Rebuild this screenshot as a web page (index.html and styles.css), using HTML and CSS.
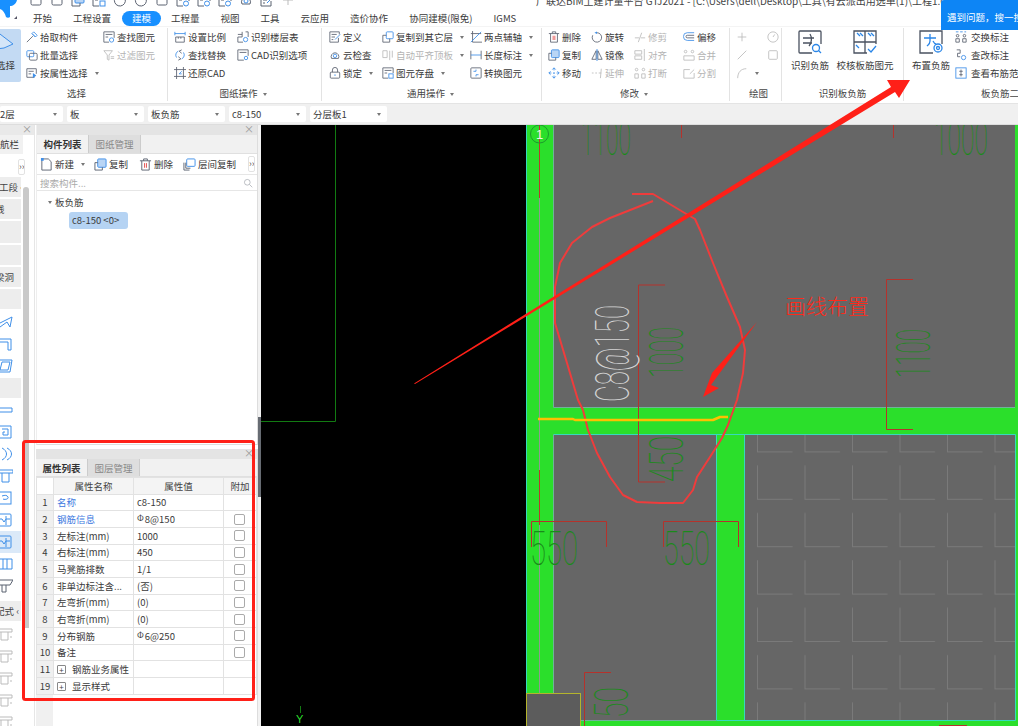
FILE: index.html
```html
<!DOCTYPE html>
<html lang="zh">
<head>
<meta charset="utf-8">
<title>广联达BIM土建计量平台 GTJ2021</title>
<link rel="stylesheet" href="styles.css">
</head>
<body>
<svg class="defs" width="0" height="0">
<symbol id="box" viewBox="0 0 14 14"><rect x="2" y="2" width="10" height="10" rx="1.5" class="g"/></symbol>
<symbol id="pick" viewBox="0 0 14 14"><path d="M1 13 8 6" class="g"/><path d="M7 3 11 7M9 1l4 4-2 2-4-4z" class="b"/></symbol>
<symbol id="batch" viewBox="0 0 14 14"><rect x="1" y="2" width="8" height="7" rx="1" class="b"/><rect x="4" y="5" width="9" height="8" rx="1.5" class="g"/></symbol>
<symbol id="prop" viewBox="0 0 14 14"><path d="M10 12H1V2h11v6M3 5h6M3 8h3" class="g"/><path d="M8 7v6l4-3z" class="fb"/></symbol>
<symbol id="find" viewBox="0 0 14 14"><path d="M7 13H1V1h12v7M3 4h8M3 7h3" class="g"/><circle cx="10" cy="10.500" r="2.500" class="b"/></symbol>
<symbol id="filter" viewBox="0 0 14 14"><path d="M1 2h10L7 7v6L5 12V7z" class="l"/><path d="M9 9h4M9 11h4" class="l"/></symbol>
<symbol id="scale" viewBox="0 0 14 14"><path d="M1 3h12M1 1v4M13 1v4" class="b"/><path d="M2 7h10v6H2zM5 7v2M8 7v2" class="g"/></symbol>
<symbol id="swap" viewBox="0 0 14 14"><path d="M3 10A5 5 0 0 1 5 2.500M11 4a5 5 0 0 1-2 7.500" class="b"/><path d="M9 1l-3 1.500L9 5M5 9l3 2.500L5 13" class="g"/></symbol>
<symbol id="restore" viewBox="0 0 14 14"><path d="M3 0v14M11 0v14M0 3h14M0 11h14" class="g"/><path d="M9 5 6 8h3" class="b"/></symbol>
<symbol id="floor" viewBox="0 0 14 14"><path d="M6 1v6H1v6h6M10 1h3v6M6 4H1" class="g"/><circle cx="10" cy="10" r="2.500" class="b"/></symbol>
<symbol id="cad" viewBox="0 0 14 14"><path d="M8 13H1V1h12v7M3 4h8" class="g"/><circle cx="10.500" cy="10.500" r="2" class="b"/></symbol>
<symbol id="def" viewBox="0 0 14 14"><path d="M11 8v5H1V1h11v3M3 4h6M3 7h4M3 10h2" class="g"/><path d="M7 10l6-6" class="b"/></symbol>
<symbol id="cloud" viewBox="0 0 14 14"><path d="M3 11A4.500 4.500 0 1 1 11 11z" class="g"/><circle cx="7" cy="8" r="2" class="b"/></symbol>
<symbol id="lock" viewBox="0 0 14 14"><rect x="1.500" y="6" width="11" height="7" rx="1" class="g"/><path d="M4 6V3.500a3 3 0 0 1 6 0V6" class="g"/><path d="M7 8.500v2" class="b"/></symbol>
<symbol id="copylayer" viewBox="0 0 14 14"><rect x="5" y="1" width="8" height="8" rx="1" class="b"/><path d="M5 5H1v8h8V9" class="g"/></symbol>
<symbol id="align" viewBox="0 0 14 14"><path d="M1 2h5v8H1zM9 2v11M12 2v8" class="l"/></symbol>
<symbol id="save" viewBox="0 0 14 14"><path d="M7 13H1V1h12v6M3 4h8M3 7h3" class="g"/><rect x="8" y="8" width="5" height="5" class="b"/></symbol>
<symbol id="axis" viewBox="0 0 14 14"><path d="M3 0v13h11M1 3h12" class="g"/><path d="M1 13 13 1" class="b"/></symbol>
<symbol id="len" viewBox="0 0 14 14"><path d="M1 2v10M13 2v10" class="g"/><path d="M1 7h12" class="b"/></symbol>
<symbol id="conv" viewBox="0 0 14 14"><rect x="1" y="1" width="12" height="12" rx="1" class="g"/><path d="M4 5h3V3M10 9H7v2" class="b"/></symbol>
<symbol id="del" viewBox="0 0 14 14"><path d="M1 3h12M5 3V1h4v2M3 3v10h8V3" class="g"/><path d="M6 5.500v5M8 5.500v5" class="r"/></symbol>
<symbol id="rot" viewBox="0 0 14 14"><path d="M7 2a5.500 5.500 0 1 1-5 3" class="g"/><path d="M7 .5v3L4 2z" class="fb"/></symbol>
<symbol id="trim" viewBox="0 0 14 14"><path d="M1 8h5M8 8h5M9 2 5 13" class="l"/></symbol>
<symbol id="copy" viewBox="0 0 14 14"><rect x="4" y="1" width="9" height="9" rx="1" class="fl"/><path d="M4 5H1v8h8v-3" class="g"/></symbol>
<symbol id="mirror" viewBox="0 0 14 14"><path d="M6 2v10H1zM8 2v10h5z" class="g"/><path d="M7 0v14" class="b"/></symbol>
<symbol id="alignv" viewBox="0 0 14 14"><path d="M1 2h8v4H1zM1 8h8v4H1zM12 0v14" class="l"/></symbol>
<symbol id="move" viewBox="0 0 14 14"><path d="M7 1v3M7 10v3M1 7h3M10 7h3" class="b"/><circle cx="7" cy="7" r="1" class="fb"/><path d="M5 3l2-2 2 2M5 11l2 2 2-2M3 5 1 7l2 2M11 5l2 2-2 2" class="b"/></symbol>
<symbol id="ext" viewBox="0 0 14 14"><path d="M1 7h2M5 7h2M9 7h3M12 2l-1 11" class="l"/></symbol>
<symbol id="brk" viewBox="0 0 14 14"><circle cx="3" cy="3" r="1.500" class="l"/><circle cx="11" cy="3" r="1.500" class="l"/><path d="M1 8h4v5H1zM9 8h4v5H9z" class="l"/></symbol>
<symbol id="off" viewBox="0 0 14 14"><path d="M13 2H5a4.500 4.500 0 0 0 0 9h8" class="b"/><path d="M13 5H5a1.500 1.500 0 0 0 0 3h8" class="g"/></symbol>
<symbol id="merge" viewBox="0 0 14 14"><circle cx="3" cy="3" r="1.500" class="l"/><circle cx="11" cy="3" r="1.500" class="l"/><path d="M1 8h12v5H1z" class="l"/></symbol>
<symbol id="split" viewBox="0 0 14 14"><path d="M13 7v6H1V3h7M8 8l5-5" class="l"/></symbol>
<symbol id="xchg" viewBox="0 0 14 14"><path d="M1 1h3M6 1h3M11 1h2" class="b"/><circle cx="3" cy="5.500" r="1.500" class="g"/><circle cx="11" cy="5.500" r="1.500" class="g"/><path d="M1 9h4v4H1zM9 9h4v4H9z" class="g"/></symbol>
<symbol id="chk" viewBox="0 0 14 14"><path d="M2 1h4v4H3v4h3" class="g"/><circle cx="10" cy="10" r="2.500" class="b"/></symbol>
<symbol id="range" viewBox="0 0 14 14"><rect x="1" y="1" width="12" height="12" class="b"/><path d="M7 3v8M5 5h4M5 9h4" class="g"/></symbol>
<symbol id="plus" viewBox="0 0 14 14"><path d="M7 2v10M2 7h10" class="l"/></symbol>
<symbol id="dial" viewBox="0 0 14 14"><circle cx="7" cy="7" r="6" class="l"/><path d="M7 7l2-3" class="l"/></symbol>
<symbol id="line" viewBox="0 0 14 14"><path d="M2 12 12 2" class="l"/></symbol>
<symbol id="sq" viewBox="0 0 14 14"><rect x="2" y="2" width="10" height="10" rx="1" class="l"/></symbol>
<symbol id="arc" viewBox="0 0 14 14"><path d="M2 13C2 6 6 2 12 2" class="l"/></symbol>
<symbol id="new" viewBox="0 0 14 14"><path d="M3 1h6l3 3v9H2V2" class="g"/><rect x="1" y="0" width="3" height="3" class="fb"/></symbol>
<symbol id="lcopy" viewBox="0 0 14 14"><rect x="4" y="1" width="9" height="8" rx="1" class="b"/><path d="M1 5v8h6M3 5v6h5" class="g"/></symbol>
<symbol id="mag" viewBox="0 0 14 14"><circle cx="6" cy="6" r="4" class="g"/><path d="M9 9l4 4" class="g"/></symbol>
<symbol id="n1" viewBox="0 0 14 14"><path d="M1 8 13 2 11 12 8 7 1 12" class="b"/></symbol>
<symbol id="n2" viewBox="0 0 14 14"><path d="M0 2h12v11h-3V5H0" class="b"/></symbol>
<symbol id="n3" viewBox="0 0 14 14"><path d="M0 1h13l-2 12H0M3 3l-2 8h8l2-8z" class="b"/></symbol>
<symbol id="n4" viewBox="0 0 14 14"><path d="M0 5h13v4H0" class="b"/></symbol>
<symbol id="n5" viewBox="0 0 14 14"><path d="M0 1h12v12H0M3 4h6v6H4V7h2" class="b"/></symbol>
<symbol id="n6" viewBox="0 0 14 14"><path d="M3 1c6 3 6 9 0 12M8 1c6 3 6 9 0 12" class="b"/></symbol>
<symbol id="n7" viewBox="0 0 14 14"><path d="M0 1h14v3H0M3 4v9h7V4" class="b"/></symbol>
<symbol id="n8" viewBox="0 0 14 14"><rect x="0" y="1" width="12" height="12" class="b"/><path d="M3 5c3-1 5-1 6 1s-3 3-5 2" class="b"/></symbol>
<symbol id="n9" viewBox="0 0 14 14"><path d="M0 6h3l2 3 2-3h4M7 3v9" class="b"/><rect x="0" y="1" width="12" height="12" rx="1" class="b"/></symbol>
<symbol id="n10" viewBox="0 0 14 14"><path d="M0 2h13v10H0M4 2v10M8 2v10" class="b"/></symbol>
<symbol id="n11" viewBox="0 0 14 14"><path d="M0 1h14l-3 5H0M3 6v7h4V6" class="g"/></symbol>
<symbol id="n12" viewBox="0 0 14 14"><path d="M0 2h13v3H0M2 5v8h7V5M11 10h2" class="l"/></symbol>
</svg>

<div class="app">
  <header class="titlebar">
    <div class="qat">
      <svg class="qi"><use href="#box"/></svg><svg class="qi"><use href="#box"/></svg><svg class="qi"><use href="#copy"/></svg><svg class="qi"><use href="#save"/></svg><svg class="qi"><use href="#rot"/></svg><svg class="qi"><use href="#rot"/></svg><svg class="qi"><use href="#box"/></svg><svg class="qi"><use href="#find"/></svg><svg class="qi"><use href="#find"/></svg><svg class="qi"><use href="#find"/></svg><svg class="qi"><use href="#cloud"/></svg><svg class="qi"><use href="#def"/></svg><svg class="qi"><use href="#plus"/></svg>
    </div>
    <div class="apptitle">广联达BIM土建计量平台 GTJ2021 - [C:\Users\dell\Desktop\工具\有云派出用选单(1)\工程1.GTJ]</div>
  </header>
  <svg class="logo" viewBox="0 0 18 19"><path d="M0 0h17c-1 4-4 6-7 6v11c-1 1-3 1-4 0-1-4-3-7-6-8z"/><path class="logo-mark" d="M14 19l3-3v3z"/></svg>
  <div class="help">遇到问题，搜一搜</div>

  <nav class="tabs">
    <span class="tab">开始</span><span class="tab">工程设置</span><span class="tab active">建模</span><span class="tab">工程量</span><span class="tab">视图</span><span class="tab">工具</span><span class="tab">云应用</span><span class="tab">造价协作</span><span class="tab">协同建模(限免)</span><span class="tab">IGMS</span>
  </nav>

  <section class="ribbon">
    <div class="grp g1">
      <div class="body">
        <div class="bigsel"><svg viewBox="0 0 21 30"><path d="M-4 2 13 15 4 19-4 20" class="bigarrow"/></svg><span>选择</span></div>
        <div class="col w77">
          <div class="it"><svg><use href="#pick"/></svg>拾取构件</div>
          <div class="it"><svg><use href="#batch"/></svg>批量选择</div>
          <div class="it"><svg><use href="#prop"/></svg>按属性选择<i class="car"></i></div>
        </div>
        <div class="col">
          <div class="it"><svg><use href="#find"/></svg>查找图元</div>
          <div class="it off"><svg><use href="#filter"/></svg>过滤图元</div>
        </div>
      </div>
      <div class="lbl">选择</div>
    </div>
    <div class="grp g2">
      <div class="body">
        <div class="col w63">
          <div class="it"><svg><use href="#scale"/></svg>设置比例</div>
          <div class="it"><svg><use href="#swap"/></svg>查找替换</div>
          <div class="it"><svg><use href="#restore"/></svg>还原CAD</div>
        </div>
        <div class="col">
          <div class="it"><svg><use href="#floor"/></svg>识别楼层表</div>
          <div class="it"><svg><use href="#cad"/></svg>CAD识别选项</div>
        </div>
      </div>
      <div class="lbl">图纸操作<i class="car"></i></div>
    </div>
    <div class="grp g3">
      <div class="body">
        <div class="col w53">
          <div class="it"><svg><use href="#def"/></svg>定义</div>
          <div class="it"><svg><use href="#cloud"/></svg>云检查</div>
          <div class="it"><svg><use href="#lock"/></svg>锁定<i class="car"></i></div>
        </div>
        <div class="col w88">
          <div class="it"><svg><use href="#copylayer"/></svg>复制到其它层<i class="car"></i></div>
          <div class="it off"><svg><use href="#align"/></svg>自动平齐顶板<i class="car"></i></div>
          <div class="it"><svg><use href="#save"/></svg>图元存盘<i class="car"></i></div>
        </div>
        <div class="col">
          <div class="it"><svg><use href="#axis"/></svg>两点辅轴<i class="car"></i></div>
          <div class="it"><svg><use href="#len"/></svg>长度标注<i class="car"></i></div>
          <div class="it"><svg><use href="#conv"/></svg>转换图元</div>
        </div>
      </div>
      <div class="lbl">通用操作<i class="car"></i></div>
    </div>
    <div class="grp g4">
      <div class="body">
        <div class="col w43">
          <div class="it"><svg><use href="#del"/></svg>删除</div>
          <div class="it"><svg><use href="#copy"/></svg>复制</div>
          <div class="it"><svg><use href="#move"/></svg>移动</div>
        </div>
        <div class="col w43">
          <div class="it"><svg><use href="#rot"/></svg>旋转</div>
          <div class="it"><svg><use href="#mirror"/></svg>镜像</div>
          <div class="it off"><svg><use href="#ext"/></svg>延伸</div>
        </div>
        <div class="col w49">
          <div class="it off"><svg><use href="#trim"/></svg>修剪</div>
          <div class="it off"><svg><use href="#alignv"/></svg>对齐</div>
          <div class="it off"><svg><use href="#brk"/></svg>打断</div>
        </div>
        <div class="col">
          <div class="it"><svg><use href="#off"/></svg>偏移</div>
          <div class="it off"><svg><use href="#merge"/></svg>合并</div>
          <div class="it off"><svg><use href="#split"/></svg>分割</div>
        </div>
      </div>
      <div class="lbl">修改<i class="car"></i></div>
    </div>
    <div class="grp g5">
      <div class="body">
        <div class="col w31">
          <div class="it"><svg><use href="#plus"/></svg></div>
          <div class="it"><svg><use href="#line"/></svg></div>
          <div class="it"><svg><use href="#arc"/></svg><i class="car"></i></div>
        </div>
        <div class="col">
          <div class="it"><svg><use href="#dial"/></svg></div>
          <div class="it"><svg><use href="#sq"/></svg></div>
        </div>
      </div>
      <div class="lbl">绘图</div>
    </div>
    <div class="grp g6">
      <div class="body">
        <div class="big b1">
          <svg viewBox="0 0 24 24"><path d="M14 23H2a1 1 0 0 1-1-1V2a1 1 0 0 1 1-1h20a1 1 0 0 1 1 1v12" class="bg"/><path d="M5 8h11M5 13h9M12 4c2 3 2 9-1 12" class="bg"/><circle cx="18" cy="18" r="3.500" class="bb"/><path d="M20.500 20.500 23 23" class="bb"/></svg>
          <span>识别负筋</span>
        </div>
        <div class="big b2">
          <svg viewBox="0 0 24 24"><path d="M14 23H1V1h22v13M12 1v22M1 12h22" class="bg"/><path d="M4 3l3 3M7 3l3 3M15 3l3 3M18 3l3 3M3 15l3 3" class="bb"/><path d="M15 19l3 3 5-6" class="bb"/></svg>
          <span>校核板筋图元</span>
        </div>
      </div>
      <div class="lbl">识别板负筋</div>
    </div>
    <div class="grp g7">
      <div class="body">
        <div class="big b3">
          <svg viewBox="0 0 24 24"><path d="M14 23H1V1h22v13" class="bg"/><path d="M5 8h12M11 4v7c0 3-2 4-3 5M14 11c1 2 2 3 3 3" class="bb"/><circle cx="19" cy="18" r="1.500" class="bb"/><circle cx="19" cy="18" r="4" class="bb"/></svg>
          <span>布置负筋</span>
        </div>
        <div class="col wide">
          <div class="it"><svg><use href="#xchg"/></svg>交换标注</div>
          <div class="it"><svg><use href="#chk"/></svg>查改标注</div>
          <div class="it"><svg><use href="#range"/></svg>查看布筋范围</div>
        </div>
      </div>
      <div class="lbl lbl7">板负筋二次编辑</div>
    </div>
  </section>

  <section class="selbar">
    <div class="dd first"><span>2层</span><i class="car"></i></div>
    <div class="dd"><span>板</span><i class="car"></i></div>
    <div class="dd"><span>板负筋</span><i class="car"></i></div>
    <div class="dd"><span>c8-150</span><i class="car"></i></div>
    <div class="dd"><span>分层板1</span><i class="car"></i></div>
  </section>

  <main class="main">
    <aside class="nav">
      <div class="navlist">
        <div class="navhead"><span class="x nx">×</span></div>
        <div class="navt">航栏</div>
        <div class="navtool"><span class="more">››</span></div>
        <div class="nrow r20 near">工段 ‹</div>
        <div class="nrow r20">线</div>
        <div class="nrow r21"></div>
        <div class="nrow r20"></div>
        <div class="nrow r20">梁洞</div>
        <div class="nrow r20"></div>
        <div class="nic"><svg><use href="#n1"/></svg></div>
        <div class="nic"><svg><use href="#n2"/></svg></div>
        <div class="nic"><svg><use href="#n3"/></svg></div>
        <div class="nrow r20 sp"></div>
        <div class="nic"><svg><use href="#n4"/></svg></div>
        <div class="nic"><svg><use href="#n5"/></svg></div>
        <div class="nic"><svg><use href="#n6"/></svg></div>
        <div class="nic"><svg><use href="#n7"/></svg></div>
        <div class="nic"><svg><use href="#n8"/></svg></div>
        <div class="nic"><svg><use href="#n9"/></svg></div>
        <div class="nic sel"><svg><use href="#n9"/></svg></div>
        <div class="nic"><svg><use href="#n10"/></svg></div>
        <div class="nic"><svg><use href="#n11"/></svg></div>
        <div class="nrow r20 fit">配式 ‹</div>
        <div class="nic"><svg><use href="#n12"/></svg></div>
        <div class="nic"><svg><use href="#n12"/></svg></div>
        <div class="nic"><svg><use href="#n12"/></svg></div>
        <div class="nic"><svg><use href="#n12"/></svg></div>
        <div class="nic"><svg><use href="#n12"/></svg></div>
      </div>
      <div class="navscroll"><div class="thumb"></div></div>
    </aside>

    <div class="panels">
      <section class="panel top">
        <div class="phead"><span class="x">×</span></div>
        <div class="ptabs"><span class="ptab on">构件列表</span><span class="ptab">图纸管理</span></div>
        <div class="ptool">
          <span class="pb p1"><svg><use href="#new"/></svg>新建<i class="car"></i></span>
          <span class="pb p2"><svg><use href="#copy"/></svg>复制</span>
          <span class="pb p3"><svg><use href="#del"/></svg>删除</span>
          <span class="pb p4"><svg><use href="#lcopy"/></svg>层间复制</span>
          <span class="more">››</span>
        </div>
        <div class="psearch"><span>搜索构件...</span><svg><use href="#mag"/></svg></div>
        <div class="tree">
          <div class="node"><i class="car"></i>板负筋</div>
          <div class="leaf">c8-150 &lt;0&gt;</div>
        </div>
      </section>
      <section class="panel bottom">
        <div class="phead"><span class="x">×</span></div>
        <div class="ptabs"><span class="ptab on">属性列表</span><span class="ptab">图层管理</span></div>
        <table class="props">
          <colgroup><col class="c1"><col class="c2"><col class="c3"><col class="c4"></colgroup>
          <thead><tr><th></th><th>属性名称</th><th>属性值</th><th>附加</th></tr></thead>
          <tbody>
            <tr><td>1</td><td class="blue">名称</td><td>c8-150</td><td></td></tr>
            <tr><td>2</td><td class="blue">钢筋信息</td><td><sup>Φ</sup>8@150</td><td><i class="cb"></i></td></tr>
            <tr><td>3</td><td>左标注(mm)</td><td>1000</td><td><i class="cb"></i></td></tr>
            <tr><td>4</td><td>右标注(mm)</td><td>450</td><td><i class="cb"></i></td></tr>
            <tr><td>5</td><td>马凳筋排数</td><td>1/1</td><td><i class="cb"></i></td></tr>
            <tr><td>6</td><td>非单边标注含...</td><td>(否)</td><td><i class="cb"></i></td></tr>
            <tr><td>7</td><td>左弯折(mm)</td><td>(0)</td><td><i class="cb"></i></td></tr>
            <tr><td>8</td><td>右弯折(mm)</td><td>(0)</td><td><i class="cb"></i></td></tr>
            <tr><td>9</td><td>分布钢筋</td><td><sup>Φ</sup>6@250</td><td><i class="cb"></i></td></tr>
            <tr><td>10</td><td>备注</td><td></td><td><i class="cb"></i></td></tr>
            <tr><td>11</td><td><i class="exp">+</i>钢筋业务属性</td><td></td><td></td></tr>
            <tr><td>19</td><td><i class="exp">+</i>显示样式</td><td></td><td></td></tr>
          </tbody>
        </table>
      </section>
    </div>

    <div class="split"><div class="s1"></div><div class="s2"></div><div class="s3"></div></div>

    <svg class="canvas" viewBox="261 125 757 601">
      <defs>
        <pattern id="ell" patternUnits="userSpaceOnUse" x="757" y="405" width="47.5" height="47.4">
          <path d="M.5 13V47H35.500" class="ell"/>
        </pattern>
      </defs>
      <rect x="261" y="125" width="757" height="601" fill="#000"/>
      <path d="M335.500 125V421.500H261" class="cadgreen"/>
      <rect x="526" y="125" width="492" height="601" fill="#2bdf2b"/>
      <rect x="553" y="125" width="462" height="282" fill="#666"/>
      <rect x="553" y="435" width="163" height="285" fill="#666"/>
      <rect x="744" y="435" width="271" height="285" fill="#666"/>
      <rect x="744" y="435" width="271" height="285" fill="url(#ell)"/>
      <path d="M553.500 125V407.500H1015" class="edge"/>
      <path d="M526.500 125V726M553.500 434.500H1015.500V720.500H716.500V434.500M744.500 434.500V720.500" class="cyan"/>
      <path d="M553.500 434.500V720.500H716" class="edge"/>
      <path d="M539.500 125V726" class="axis"/>
      <path d="M539.500 125V198M539.500 470V525" class="tick"/>
      <circle cx="539.500" cy="134" r="9" class="bubble"/>
      <text x="539.500" y="139" class="bubnum">1</text>
      <path d="M665 285H638.500V482H665M913 279.500H886.500V429.500H913M531.500 547V521.500H606.500V547M663.500 547V521.500H738.500V547M611 672.500H584.500V726M681.500 125V138M893.500 125V138M939 725.500H967" class="brk"/>
      <text x="581" y="155" textLength="50" lengthAdjust="spacingAndGlyphs" class="cad">1100</text>
      <text x="934" y="155" textLength="54" lengthAdjust="spacingAndGlyphs" class="cad">1000</text>
      <text transform="translate(683 378) rotate(-90)" textLength="51" lengthAdjust="spacingAndGlyphs" class="cad">1000</text>
      <text transform="translate(683 482) rotate(-90)" textLength="46" lengthAdjust="spacingAndGlyphs" class="cad">450</text>
      <text transform="translate(930 378) rotate(-90)" textLength="49" lengthAdjust="spacingAndGlyphs" class="cad">1100</text>
      <text x="530" y="565" textLength="48" lengthAdjust="spacingAndGlyphs" class="cad">550</text>
      <text x="663" y="565" textLength="47" lengthAdjust="spacingAndGlyphs" class="cad">550</text>
      <text transform="translate(628 718) rotate(-90)" textLength="31" lengthAdjust="spacingAndGlyphs" class="cad">50</text>
      <text transform="translate(629 402) rotate(-90)" textLength="97" lengthAdjust="spacingAndGlyphs" class="cad white">C8@150</text>
      <rect x="526.500" y="693.500" width="54" height="33" class="ybox"/>
      <path d="M300.500 713V706" class="cadgreen"/>
      <text x="296" y="723" class="yaxis">Y</text>
      <text x="785" y="314" class="note">画线布置</text>
    </svg>
  </main>

  <svg class="overlay" viewBox="0 0 1018 726">
    <rect x="23.500" y="441.500" width="230" height="258" rx="2" class="mark-box"/>
    <path d="M632 194H653L663 200L683 212L695 219L700 230L713 263L727 297L740 327L745 350L743 373L737 400L728 425L722 438L710 457L697 477L693 490L683 503L660 503L637 502L623 495L610 477L597 453L588 430L583 410L578 400L567 363L555 323L555 287L560 263L572 243L592 227L610 218L653 201" class="curve"/>
    <path d="M538 419H573L575 420H713L720 417H728" class="yline"/>
    <path d="M414 383.500 891 87 887 80 910 80 899 98 895 92 415 384Z" class="arrow"/>
    <path d="M757 322 712 373 703 397 719 388 711 385Z" class="arrow"/>
  </svg>
</div>
</body>
</html>
```
FILE: styles.css
```css
* { box-sizing: border-box; }
html, body { margin: 0; height: 100%; }
body { background: #fff; overflow: hidden; font-family: "Noto Sans CJK SC", "Noto Sans", sans-serif; font-size: 9.5px; color: #3a3a3a; }
i { font-style: normal; }
.defs { position: absolute; }
.g, .b, .l, .r, .fl, .bg, .bb { fill: none; stroke-width: 1; }
.g { stroke: #5b6270; }
.b { stroke: #3f8fe8; }
.l { stroke: #bbb; }
.r { stroke: #e24a4a; }
.fl { fill: #b9d5f5; stroke: #3f8fe8; }
.fb { fill: #3f8fe8; }
.bg { stroke: #4a5260; stroke-width: 1.3; }
.bb { stroke: #2a86e8; stroke-width: 1.3; }

.app { position: relative; width: 1018px; height: 726px; overflow: hidden; display: flex; flex-direction: column; background: #fff; }

.titlebar { height: 8px; flex: none; display: flex; overflow: hidden; }
.qat { width: 536px; flex: none; padding-left: 29px; display: flex; gap: 7px; }
.qi { width: 14px; height: 14px; margin-top: -7px; flex: none; }
.apptitle { font-size: 10px; line-height: 12px; margin-top: -5px; white-space: nowrap; color: #444; }
.logo { position: absolute; left: 0; top: 0; width: 18px; height: 19px; fill: #1890ff; }
.logo .logo-mark { fill: #556; }
.help { position: absolute; left: 941px; top: 0; width: 77px; height: 30px; padding: 10px 0 0 6px; background: #0d85f5; color: #fff; white-space: nowrap; overflow: hidden; border-top-left-radius: 3px; z-index: 2; }

.tabs { height: 18px; flex: none; padding: 2px 0 0 23px; display: flex; gap: 1px; align-items: center; background: #fff; }
.tab { padding: 0 10px; line-height: 15px; white-space: nowrap; }
.tab.active { background: #1890ff; color: #fff; border-radius: 8px; margin-right: -1px; }

.ribbon { height: 77px; flex: none; display: flex; background: #fff; padding-top: 1px; border-top: 1px solid #f4f4f4; }
.grp { position: relative; display: flex; flex-direction: column; height: 73px; border-right: 1px solid #e3e3e3; flex: none; }
.g1 { width: 168px; }
.g2 { width: 154px; padding-left: 6px; }
.g3 { width: 220px; padding-left: 7px; }
.g4 { width: 188px; padding-left: 6px; }
.g5 { width: 52px; padding-left: 6px; }
.g6 { width: 122px; }
.g7 { width: 114px; border-right: 0; }
.body { height: 54px; display: flex; flex: none; }
.lbl { height: 17px; line-height: 17px; margin-top: 3px; text-align: center; white-space: nowrap; color: #444; }
.g1 .lbl { padding-right: 14px; }
.g2 .lbl, .g3 .lbl, .g4 .lbl { padding-right: 9px; }
.g7 .lbl7 { margin-left: 77px; text-align: left; overflow: hidden; }
.col { display: flex; flex-direction: column; }
.w77 { width: 77px; }
.w63 { width: 63px; }
.w53 { width: 53px; }
.w88 { width: 88px; }
.w43 { width: 43px; }
.w49 { width: 49px; }
.w31 { width: 31px; }
.it { height: 18px; display: flex; align-items: center; gap: 2px; white-space: nowrap; }
.it svg { width: 12px; height: 12px; flex: none; }
.it.off { color: #b4b4b4; }
.wide { flex: 1; min-width: 0; overflow: hidden; }
.wide .it { gap: 4px; }
.car { display: inline-block; width: 0; height: 0; border: 2.5px solid transparent; border-top: 3px solid #777; border-bottom: 0; margin-left: 5px; vertical-align: middle; }
.bigsel { width: 21px; height: 53px; margin-top: 1px; margin-right: 5px; background: #c3daf3; border-radius: 0 2px 2px 0; display: flex; flex-direction: column; overflow: hidden; align-items: flex-end; }
.bigsel svg { width: 21px; height: 30px; flex: none; }
.bigarrow { fill: #d5e6f8; stroke: #3f8fe8; }
.bigsel span { white-space: nowrap; line-height: 12px; margin-right: 6px; }
.big { position: relative; display: flex; flex-direction: column; align-items: center; flex: none; white-space: nowrap; }
.big svg { width: 24px; height: 24px; margin-top: 2px; margin-bottom: 4px; flex: none; }
.big span { line-height: 14px; }
.b1 { width: 56px; }
.b2 { width: 54px; }
.b3 { width: 51px; padding-left: 3px; }

.selbar { height: 22px; flex: none; display: flex; gap: 4px; align-items: center; background: #f0f0f0; border-top: 1px solid #e4e4e4; border-bottom: 1px solid #ddd; }
.dd { width: 77px; height: 16px; background: #fff; border-radius: 2px; padding: 0 3px; display: flex; justify-content: space-between; align-items: center; white-space: nowrap; }
.dd.first { width: 63px; padding-left: 0; }
.dd .car { margin: 0 3px 0 0; }

.main { flex: 1; min-height: 0; display: flex; }
.nav { width: 35px; flex: none; display: flex; background: #fff; border-right: 1px solid #e6e6e6; overflow: hidden; }
.navlist { width: 23px; flex: none; display: flex; flex-direction: column; overflow: visible; }
.navhead { height: 10px; background: #e9e9e9; flex: none; position: relative; width: 35px; }
.nx { right: 4px; }
.navt { height: 19px; line-height: 19px; text-align: right; padding-right: 4px; flex: none; white-space: nowrap; background: #f1f1f1; width: 23px; }
.navtool { height: 23px; flex: none; position: relative; }
.navtool .more { position: absolute; left: 18px; top: 5px; }
.nrow { flex: none; background: #ededed; margin-bottom: 2px; white-space: nowrap; overflow: hidden; text-indent: -5px; width: 21px; color: #444; line-height: 20px; }
.nrow.near { text-indent: -1px; }
.r20 { height: 20px; }
.r21 { height: 22px; }
.sp { margin-top: 1px; margin-bottom: 1px; }
.fit { margin-top: 4px; }
.nic { height: 22px; flex: none; width: 21px; overflow: hidden; display: flex; justify-content: flex-end; align-items: center; }
.nic svg { width: 14px; height: 16px; margin-right: 8px; flex: none; }
.nic.sel { background: #dbe9f8; }
.navscroll { width: 12px; flex: none; border-right: 1px solid #e6e6e6; margin-top: 52px; position: relative; }
.thumb { width: 6px; height: 441px; margin-top: 10px; background: #c9c9c9; border-radius: 3px 3px 0 0; }

.panels { width: 223px; flex: none; display: flex; flex-direction: column; gap: 4px; padding-left: 1px; background: #fff; }
.panel { position: relative; border-right: 1px solid #ddd; display: flex; flex-direction: column; background: #fff; }
.panel.top { height: 320px; flex: none; border-bottom: 1px solid #ddd; border-left: 1px solid #eee; }
.panel.bottom { flex: 1; min-height: 0; overflow: hidden; background: linear-gradient(to right, #f0f0f0 17px, #fff 17px); }
.phead { height: 10px; flex: none; background: #e4e4e4; position: relative; }
.x { position: absolute; right: 3px; top: -2px; color: #999; font-size: 10px; line-height: 12px; }
.ptabs { height: 19px; flex: none; display: flex; background: #f1f1f1; border-bottom: 1px solid #e0e0e0; }
.bottom .ptabs { height: 18px; }
.ptab { width: 52px; text-align: center; line-height: 18px; background: #dedede; color: #888; border-right: 1px solid #ccc; }
.ptab.on { background: #f2f2f2; color: #333; font-weight: 700; }
.ptool { height: 21px; flex: none; position: relative; display: flex; align-items: center; border-bottom: 1px solid #e6e6e6; }
.pb { display: flex; align-items: center; gap: 2px; white-space: nowrap; flex: none; }
.pb svg { width: 13px; height: 13px; flex: none; }
.p1 { margin-left: 3px; width: 54px; }
.p2 { width: 45px; }
.p3 { width: 44px; }
.p4 { width: 65px; }
.more { color: #555; font-size: 9px; line-height: 10px; border: 1px solid #e2e2e2; border-radius: 2px; padding: 2px 0; width: 7px; display: inline-block; overflow: hidden; text-align: center; }
.psearch { height: 16px; flex: none; display: flex; justify-content: space-between; align-items: center; padding: 0 4px 0 3px; color: #aaa; border-bottom: 1px solid #e6e6e6; }
.psearch svg { width: 10px; height: 10px; opacity: .55; }
.tree { padding: 4px 0 0 11px; }
.node { height: 14px; line-height: 14px; margin-bottom: 3px; display: flex; align-items: center; }
.node .car { margin: 0 3px 0 0; }
.leaf { margin-left: 21px; width: 59px; height: 17px; line-height: 17px; padding-left: 3px; background: #b5d3f3; border-radius: 3px; white-space: nowrap; }

.props { width: 221px; table-layout: fixed; border-collapse: collapse; font-size: 9.5px; }
.c1 { width: 17px; }
.c2 { width: 80px; }
.c3 { width: 90px; }
.props th, .props td { border: 1px solid #e2e2e2; height: 16.67px; padding: 0 3px; white-space: nowrap; overflow: hidden; font-weight: 400; }
.props th { text-align: center; background: #f4f4f4; color: #444; }
.props td:first-child { text-align: center; background: #f0f0f0; padding: 0; }
.props td:last-child { text-align: center; padding: 0 2px 0 0; }
.props th:first-child { background: #fff; }
.blue { color: #3b78e0; }
sup { font-size: 8.5px; line-height: 0; margin-right: 1px; vertical-align: 2px; }
.cb { display: block; width: 11px; height: 11px; margin: 0 auto; border: 1px solid #aaa; border-radius: 2px; background: #fff; }
.exp { display: inline-block; width: 9px; height: 9px; margin-right: 6px; border: 1px solid #888; border-radius: 1px; font-size: 8px; line-height: 7px; text-align: center; color: #444; }

.split { width: 3px; flex: none; display: flex; flex-direction: column; }
.s1 { height: 292px; background: #f2f2f2; }
.s2 { height: 80px; background: #676c73; }
.s3 { flex: 1; background: #f2f2f2; }

.canvas { width: 757px; height: 601px; flex: none; display: block; }
.ell { fill: none; stroke: #7a7a7a; stroke-width: 1; }
.cadgreen { fill: none; stroke: #127a12; stroke-width: 1; }
.cyan { fill: none; stroke: #36d9bd; stroke-width: 1; }
.edge { fill: none; stroke: #6fb39a; stroke-width: 1; }
.axis { fill: none; stroke: #8f9a8f; stroke-width: 1; }
.tick { fill: none; stroke: #b83a2c; stroke-width: 1; }
.bubble { fill: none; stroke: #1d9a2d; stroke-width: 1; }
.bubnum { fill: #e8f8e8; font-family: "Liberation Sans", sans-serif; font-size: 13px; text-anchor: middle; }
.brk { fill: none; stroke: #b5322c; stroke-width: 1; }
.cad { font-family: Roboto, "Liberation Sans", sans-serif; font-weight: 100; font-size: 48px; fill: #1a8a1a; }
.cad.white { fill: #d6d6d6; }
.ybox { fill: #5c5c5c; stroke: #b4b42c; stroke-width: 1; }
.yaxis { font-family: "Liberation Sans", sans-serif; font-size: 11px; fill: #2bdf2b; }
.note { font-family: "Noto Sans CJK SC", sans-serif; font-size: 21px; font-weight: 300; fill: #ff2a1a; }

.overlay { position: absolute; left: 0; top: 0; width: 1018px; height: 726px; pointer-events: none; z-index: 3; }
.mark-box { fill: none; stroke: #ff2018; stroke-width: 3; }
.curve { fill: none; stroke: #ef3c3c; stroke-width: 2; stroke-linejoin: round; }
.yline { fill: none; stroke: #ffc000; stroke-width: 2.5; stroke-linejoin: round; }
.arrow { fill: #ff2018; }
```
